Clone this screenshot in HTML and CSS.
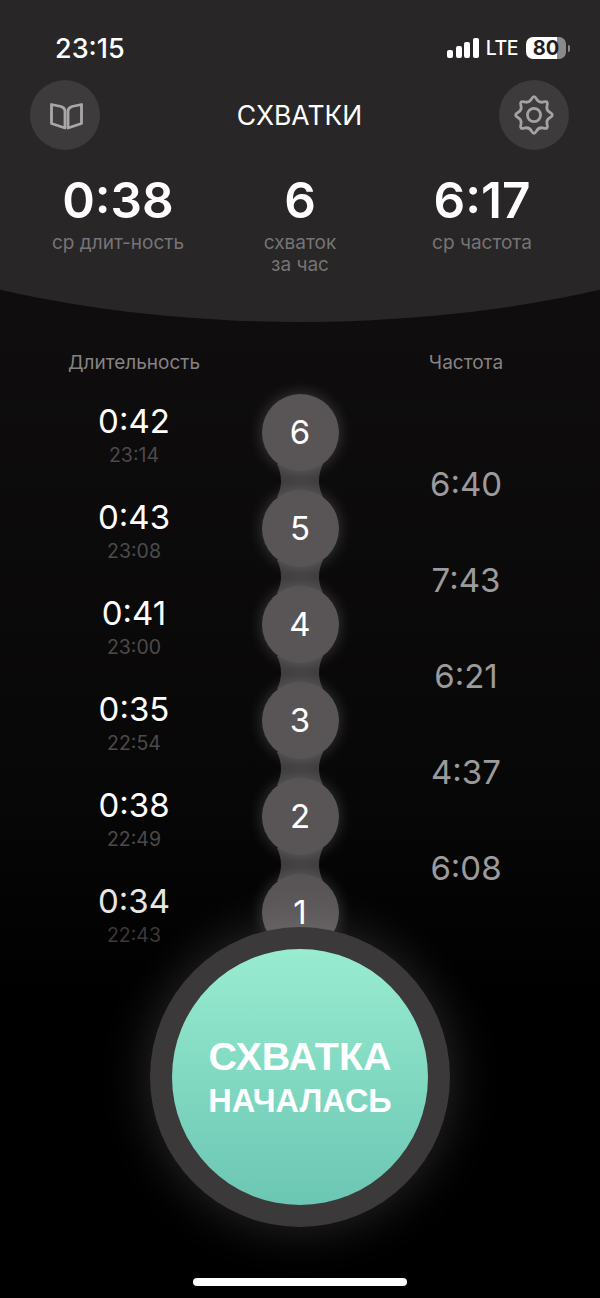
FILE: index.html
```html
<!DOCTYPE html>
<html lang="ru">
<head>
<meta charset="utf-8">
<title>Схватки</title>
<link rel="stylesheet" href="styles.css">
</head>
<body>
<div class="app">
  <header class="top">
    <div class="status">
      <span class="clock">23:15</span>
      <div class="indicators">
        <div class="signal"><i class="b1"></i><i class="b2"></i><i class="b3"></i><i class="b4"></i></div>
        <span class="lte">LTE</span>
        <div class="battery"><span class="level">80</span></div>
        <i class="nub"></i>
      </div>
    </div>
    <nav class="nav">
      <button class="round" aria-label="Книга">
        <svg class="book" viewBox="0 0 36 32" fill="none">
          <path d="M4.5 5.5 L14 7.5 Q18 9 18 12 V29 L4.5 24.5 Z"/>
          <path d="M34.5 5.5 L25 7.5 Q21 9 21 12 V29 L34.5 24.5 Z"/>
        </svg>
      </button>
      <h1 class="title">СХВАТКИ</h1>
      <button class="round" aria-label="Настройки">
        <svg class="gear" viewBox="0 0 48 48" fill="none">
          <path d="M26.78 5.55 Q29.55 10.60 35.09 8.99 Q40.62 7.38 39.01 12.92 Q37.40 18.45 42.45 21.23 Q47.5 24 42.45 26.78 Q37.40 29.55 39.01 35.09 Q40.62 40.62 35.09 39.01 Q29.55 37.40 26.78 42.45 Q24 47.5 21.23 42.45 Q18.45 37.40 12.92 39.01 Q7.38 40.62 8.99 35.09 Q10.60 29.55 5.55 26.78 Q.5 24 5.55 21.23 Q10.60 18.45 8.99 12.92 Q7.38 7.38 12.92 8.99 Q18.45 10.60 21.23 5.55 Q24 .5 26.78 5.55Z"/>
          <circle cx="24" cy="24" r="7.5"/>
        </svg>
      </button>
    </nav>
    <section class="stats">
      <div class="stat"><div class="stat-value">0:38</div><div class="stat-label">ср длит-ность</div></div>
      <div class="stat"><div class="stat-value">6</div><div class="stat-label">схваток<br>за час</div></div>
      <div class="stat"><div class="stat-value">6:17</div><div class="stat-label">ср частота</div></div>
    </section>
  </header>

  <div class="heads">
    <span class="head">Длительность</span>
    <span class="head head-right">Частота</span>
  </div>

  <main class="list">
    <div class="col">
      <div class="entry"><div class="dur">0:42</div><div class="at">23:14</div></div>
      <div class="entry"><div class="dur">0:43</div><div class="at">23:08</div></div>
      <div class="entry"><div class="dur">0:41</div><div class="at">23:00</div></div>
      <div class="entry"><div class="dur">0:35</div><div class="at">22:54</div></div>
      <div class="entry"><div class="dur">0:38</div><div class="at">22:49</div></div>
      <div class="entry"><div class="dur">0:34</div><div class="at">22:43</div></div>
    </div>
    <div class="beads">
      <div class="bead">6</div>
      <svg class="neck" viewBox="0 0 60 33"><path d="M7 0 H53 Q45 16.5 53 33 H7 Q15 16.5 7 0Z"/></svg>
      <div class="bead">5</div>
      <svg class="neck" viewBox="0 0 60 33"><path d="M7 0 H53 Q45 16.5 53 33 H7 Q15 16.5 7 0Z"/></svg>
      <div class="bead">4</div>
      <svg class="neck" viewBox="0 0 60 33"><path d="M7 0 H53 Q45 16.5 53 33 H7 Q15 16.5 7 0Z"/></svg>
      <div class="bead">3</div>
      <svg class="neck" viewBox="0 0 60 33"><path d="M7 0 H53 Q45 16.5 53 33 H7 Q15 16.5 7 0Z"/></svg>
      <div class="bead">2</div>
      <svg class="neck" viewBox="0 0 60 33"><path d="M7 0 H53 Q45 16.5 53 33 H7 Q15 16.5 7 0Z"/></svg>
      <div class="bead">1</div>
    </div>
    <div class="col freq-col">
      <div class="freq">6:40</div>
      <div class="freq">7:43</div>
      <div class="freq">6:21</div>
      <div class="freq">4:37</div>
      <div class="freq">6:08</div>
    </div>
  </main>

  <div class="ring">
    <button class="start"><span class="start-a">СХВАТКА</span><span class="start-b">НАЧАЛАСЬ</span></button>
  </div>
  <div class="home"></div>
</div>
</body>
</html>
```

FILE: styles.css
```css
* { box-sizing: border-box; }
html, body { margin: 0; padding: 0; background: #000; }
body { font-family: Inter, "Noto Sans", "Liberation Sans", sans-serif; color: #fff; }

.app {
  width: 600px;
  height: 1298px;
  overflow: hidden;
  display: flex;
  flex-direction: column;
  background: linear-gradient(180deg, #0f0d0e 0, #0f0d0e 320px, #080707 800px, #000 1000px);
}

.top {
  height: 322px;
  flex: none;
  padding-top: 30px;
  background: #282627;
  clip-path: ellipse(688px 322px at 300px 0);
}

.status {
  height: 36px;
  display: flex;
  align-items: center;
  justify-content: space-between;
  padding: 0 30px 0 55px;
}
.clock { font-size: 27px; font-weight: 500; }
.indicators { display: flex; align-items: center; }
.signal { display: flex; align-items: flex-end; gap: 2.5px; height: 20px; }
.signal i { display: block; width: 6px; border-radius: 2px; background: #fff; }
.b1 { height: 8px; }
.b2 { height: 12px; }
.b3 { height: 16px; }
.b4 { height: 20px; }
.lte { margin-left: 7px; font-size: 19.5px; font-weight: 500; letter-spacing: -.5px; }
.battery {
  margin-left: 8px;
  width: 40px;
  height: 22px;
  border-radius: 7px;
  background: linear-gradient(90deg, #fff 0, #fff 78%, #8b8a8a 78%, #8b8a8a 100%);
  display: flex;
  align-items: center;
  justify-content: center;
}
.level { font-size: 20px; font-weight: 700; color: #1f1d1e; }
.nub { display: block; width: 2px; height: 7px; margin-left: 2px; border-radius: 0 2px 2px 0; background: #8b8a8a; }

.nav {
  margin-top: 14px;
  height: 70px;
  display: flex;
  align-items: center;
  justify-content: space-between;
  padding: 0 31px 0 30px;
}
.round {
  width: 70px;
  height: 70px;
  padding: 0;
  border: 0;
  border-radius: 50%;
  background: #3d3b3c;
  display: flex;
  align-items: center;
  justify-content: center;
}
.book { width: 36px; height: 32px; flex: none; }
.book path { stroke: #a8a8a8; stroke-width: 2.8; stroke-linejoin: round; }
.gear { width: 42px; height: 42px; flex: none; }
.gear path, .gear circle { stroke: #a3a3a3; stroke-width: 3.2; }
.title { margin: 0; font-size: 26.5px; font-weight: 400; line-height: 32px; }

.stats {
  margin-top: 25px;
  padding: 0 27px;
  display: grid;
  grid-template-columns: repeat(3, 182px);
  text-align: center;
}
.stat-value { font-size: 49.5px; font-weight: 600; line-height: 50px; }
.stat-label { margin-top: 7px; font-size: 19px; line-height: 22px; color: #767475; }

.heads {
  flex: none;
  padding: 29px 26px 0;
  height: 62px;
  display: grid;
  grid-template-columns: 216px 116px 216px;
  text-align: center;
  font-size: 19px;
  line-height: 24px;
  color: #858384;
}
.head-right { grid-column: 3; }

.list {
  flex: none;
  height: 576px;
  padding: 0 26px;
  display: grid;
  grid-template-columns: 216px 116px 216px;
  text-align: center;
}
.entry { height: 96px; padding-top: 19px; }
.dur { font-size: 33px; line-height: 36px; font-weight: 400; color: #fff; }
.at { margin-top: 5px; font-size: 19.5px; line-height: 22px; color: #4c4a4b; }
.entry:last-child .dur { color: #e6e6e6; }
.entry:last-child .at { color: #3b393a; }
.freq-col { padding-top: 82px; }
.freq { height: 96px; font-size: 33px; line-height: 36px; color: #9c9a9b; }

.beads {
  padding-top: 9.5px;
  display: flex;
  flex-direction: column;
  align-items: center;
}
.bead {
  position: relative;
  z-index: 1;
  flex: none;
  width: 77px;
  height: 77px;
  border-radius: 50%;
  background: #595556;
  box-shadow: 0 0 16px rgba(255, 255, 255, .2);
  display: flex;
  align-items: center;
  justify-content: center;
  font-size: 33px;
  color: #fff;
}
.neck { flex: none; width: 60px; height: 33px; margin: -7px 0; }
.neck path { fill: #3f3d3e; }

.ring {
  position: relative;
  z-index: 2;
  flex: none;
  align-self: center;
  width: 300px;
  height: 300px;
  margin-top: -33px;
  border-radius: 50%;
  background: #3b393a;
  box-shadow: 0 0 50px rgba(255, 255, 255, .17);
  display: flex;
  align-items: center;
  justify-content: center;
}
.start {
  width: 256px;
  height: 256px;
  padding: 0;
  border: 0;
  border-radius: 50%;
  background: linear-gradient(180deg, #98ecd0 0, #6bc6b3 100%);
  color: #fff;
  font-family: "Liberation Sans", Arial, sans-serif;
  font-weight: 700;
  display: flex;
  flex-direction: column;
  align-items: center;
  justify-content: center;
}
.start-a { font-size: 39.5px; line-height: 46px; margin-top: -1px; }
.start-b { font-size: 32.5px; line-height: 40px; margin-top: 2px; }

.home {
  flex: none;
  align-self: center;
  width: 214px;
  height: 8px;
  margin-top: 51px;
  border-radius: 4px;
  background: #fff;
}
```
